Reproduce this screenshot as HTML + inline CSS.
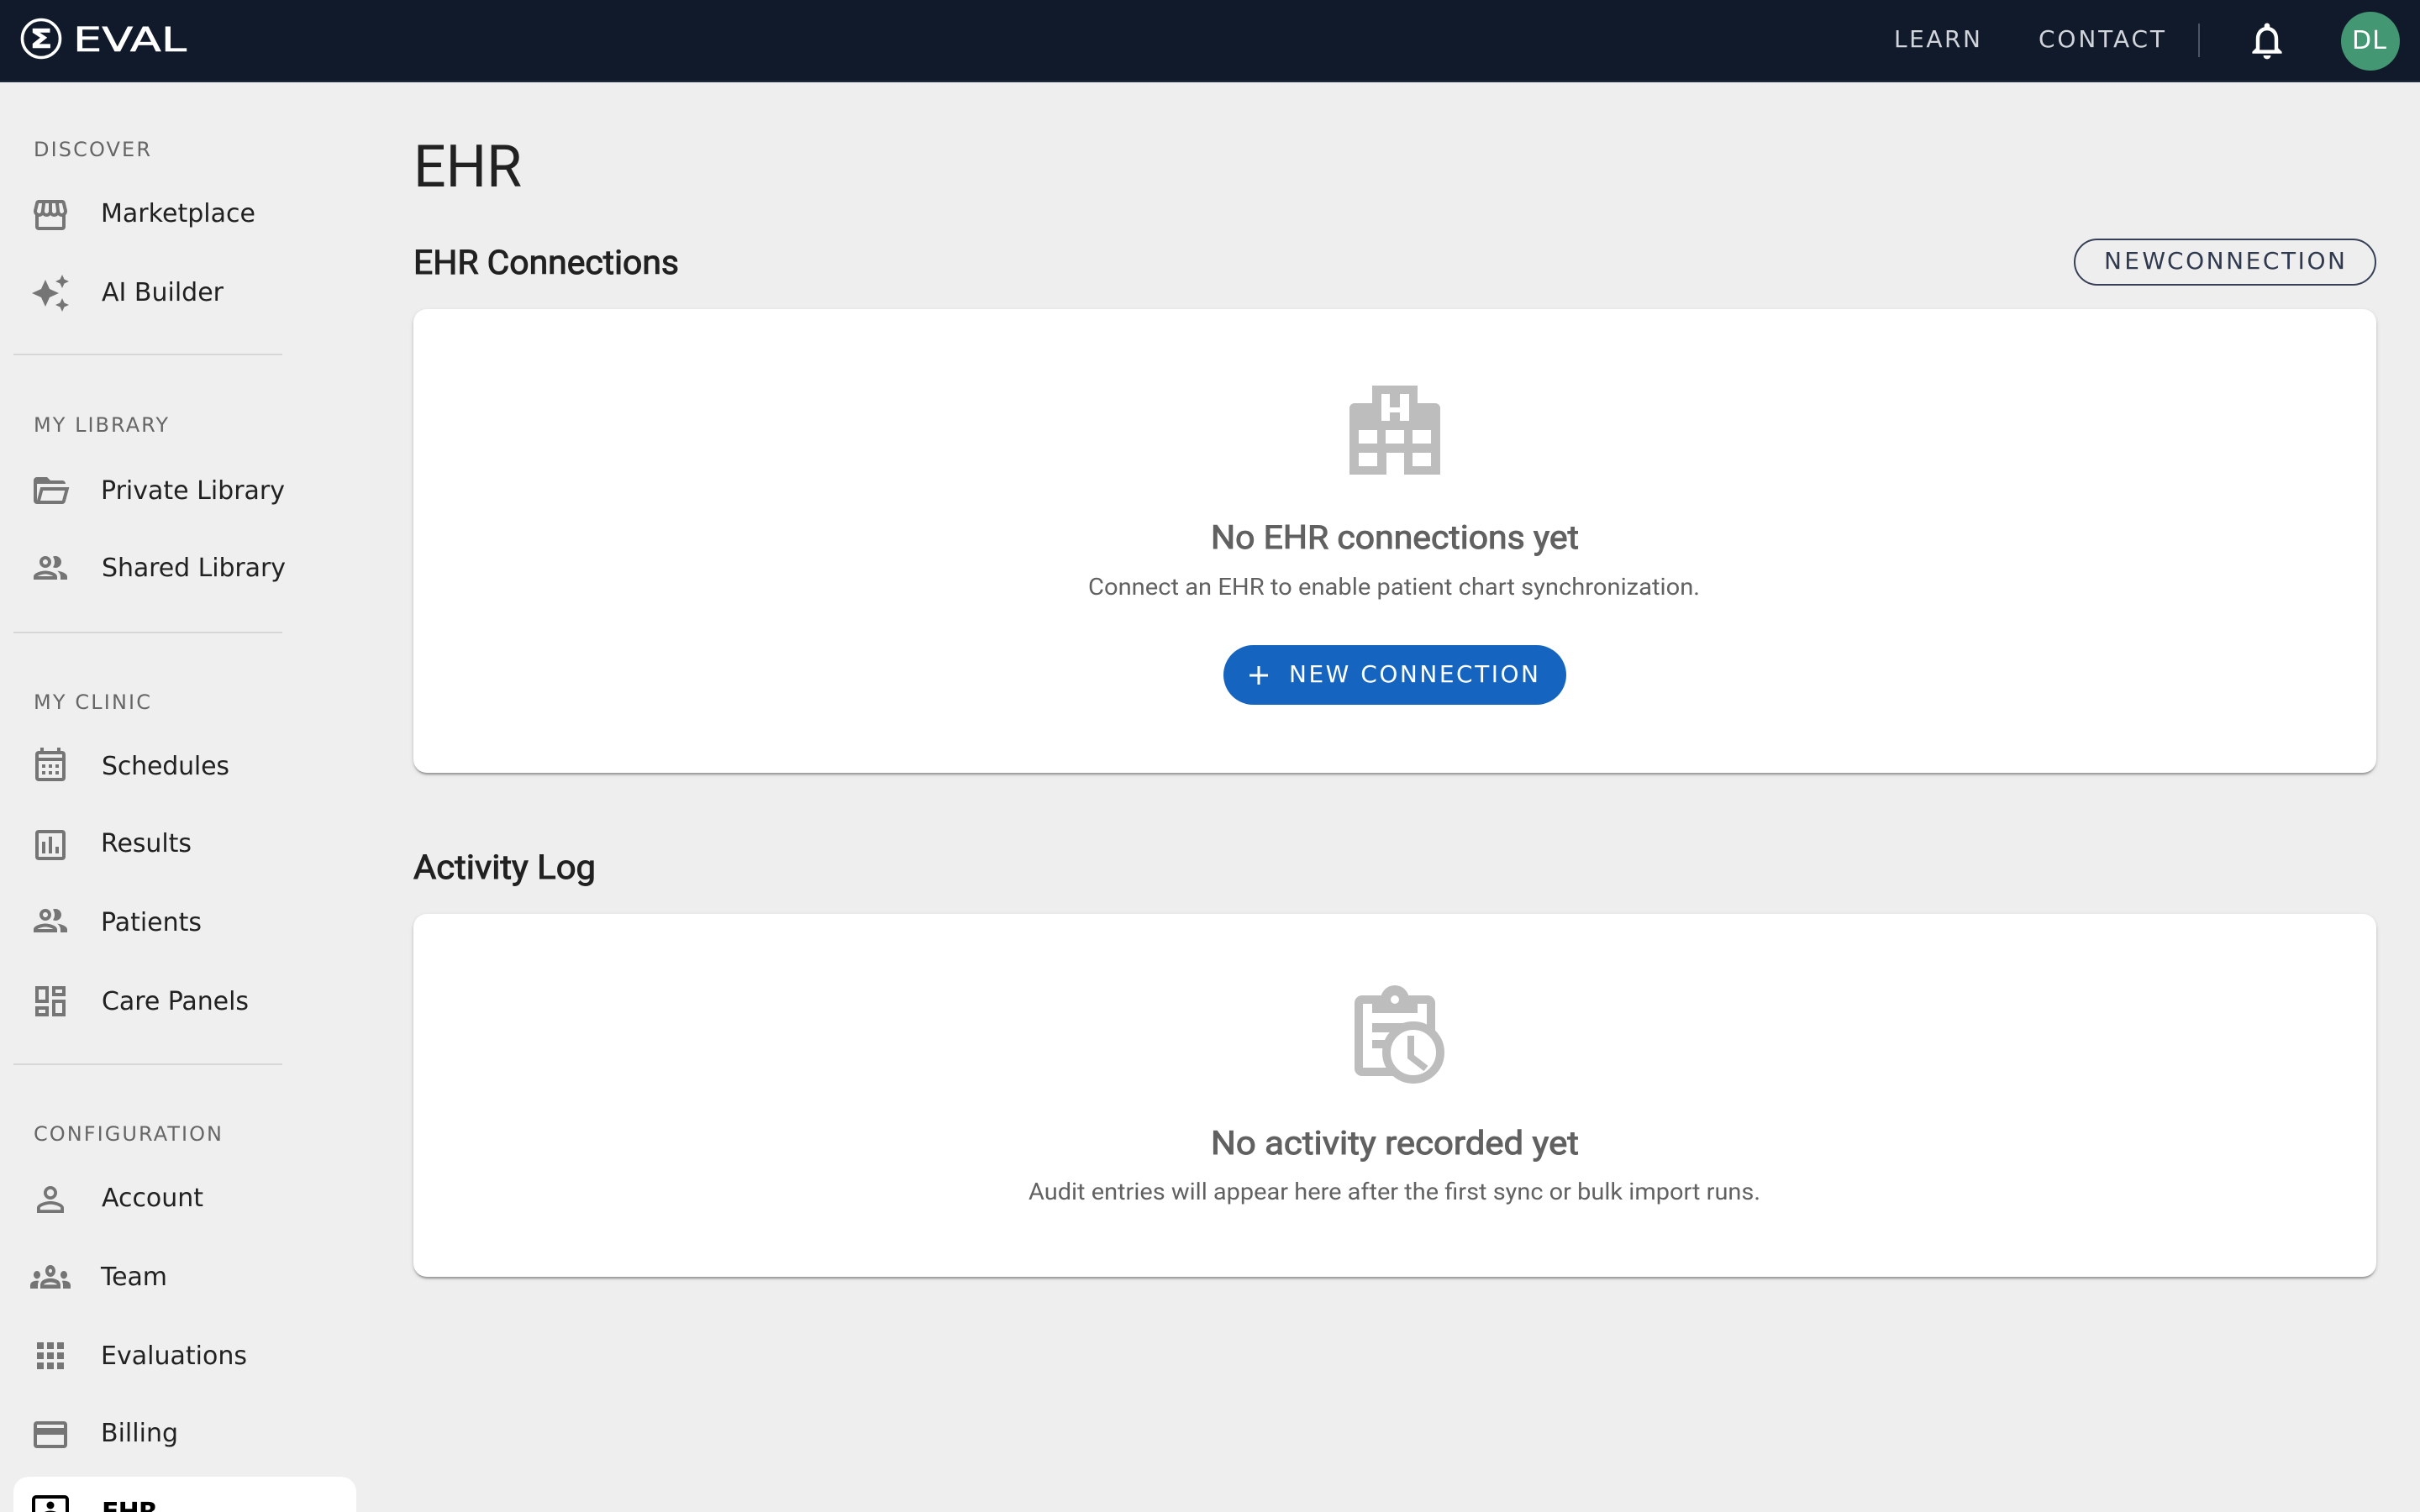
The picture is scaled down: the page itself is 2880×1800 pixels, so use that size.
<!DOCTYPE html>
<html lang="en">
<head>
<meta charset="utf-8">
<title>EHR</title>
<style>
html,body{margin:0;padding:0;width:2880px;height:1800px;overflow:hidden;background:#eeeeee}
.page{position:relative;width:2880px;height:1800px;overflow:hidden;background:#eeeeee}
.bar{position:absolute;left:0;top:0;width:2880px;height:96px;background:#111a2a;border-bottom:2px solid #1e293b}
.side{position:absolute;left:0;top:98px;width:440px;height:1702px;background:#efefef}
.active{position:absolute;left:16px;top:1758px;width:408px;height:84px;background:#fff;border-radius:18px}
.rule{position:absolute;left:16px;width:320px;height:2px;background:#d6d6d6}
.card{position:absolute;left:492px;width:2336px;background:#fff;border-radius:16px;box-shadow:0 4px 2px -2px rgba(0,0,0,.2),0 2px 2px 0 rgba(0,0,0,.14),0 2px 6px 0 rgba(0,0,0,.12)}
.avatar{position:absolute;left:2786px;top:14px;width:70px;height:70px;border-radius:50%;background:#439773}
.pill{position:absolute;left:2468px;top:284px;width:356px;height:52px;border:2px solid #374056;border-radius:28px}
.cta{position:absolute;left:1456px;top:768px;width:408px;height:71px;border-radius:36px;background:#1565c0}
.vr{position:absolute;left:2616px;top:28px;width:2px;height:40px;background:#4b5563}
svg.layer{position:absolute;left:0;top:0}
.d{font-family:"DejaVu Sans",sans-serif}
.r{font-family:"Roboto","Liberation Sans",sans-serif}
.nav{font-size:30px;fill:#212121}
.lab{font-size:24px;fill:#666666}
.ic{fill:#757575}
.top{font-size:28px;fill:#d1d5db}
</style>
</head>
<body>
<div class="page">
<header class="bar"></header>
<aside class="side"></aside>
<div class="active"></div>
<div class="rule" style="top:421px"></div>
<div class="rule" style="top:752px"></div>
<div class="rule" style="top:1266px"></div>
<div class="vr"></div>
<div class="avatar"></div>
<div class="pill"></div>
<div class="card" style="top:368px;height:552px"></div>
<div class="card" style="top:1088px;height:432px"></div>
<div class="cta"></div>

<svg class="layer" width="2880" height="1800" viewBox="0 0 2880 1800" xmlns="http://www.w3.org/2000/svg">
  <!-- logo -->
  <circle cx="49" cy="46" r="22.500" fill="none" stroke="#fff" stroke-width="3.600"/>
  <text class="d" x="35.500" y="57" font-size="31" font-weight="700" fill="#fff" stroke="#fff" stroke-width=".5" textLength="27" lengthAdjust="spacingAndGlyphs">Σ</text>
  <text class="d" x="87" y="61" font-size="40" fill="#fff" stroke="#fff" stroke-width=".6" textLength="135" lengthAdjust="spacingAndGlyphs">EVAL</text>

  <!-- top nav -->
  <text class="d top" x="2254" y="56" textLength="103">LEARN</text>
  <text class="d top" x="2426" y="56" textLength="150">CONTACT</text>
  <path fill="#fff" transform="translate(2671.6 22) scale(2.2)" d="M12 22c1.1 0 2-.9 2-2h-4c0 1.1.9 2 2 2zm6-6v-5c0-3.07-1.63-5.64-4.5-6.32V4c0-.83-.67-1.5-1.5-1.5s-1.5.67-1.5 1.5v.68C7.64 5.36 6 7.92 6 11v5l-2 2v1h16v-1l-2-2zm-2 1H8v-6c0-2.48 1.51-4.5 4-4.5s4 2.02 4 4.5v6z"/>
  <text class="d" x="2799" y="58" font-size="30" fill="#fff" textLength="41">DL</text>

  <!-- sidebar labels -->
  <text class="d lab" x="40" y="186" textLength="139">DISCOVER</text>
  <text class="d lab" x="40" y="514" textLength="160">MY LIBRARY</text>
  <text class="d lab" x="40" y="844" textLength="139">MY CLINIC</text>
  <text class="d lab" x="40" y="1358" textLength="224">CONFIGURATION</text>

  <!-- sidebar items -->
  <text class="d nav" x="120" y="264" textLength="184">Marketplace</text>
  <text class="d nav" x="121" y="358" textLength="145">AI Builder</text>
  <text class="d nav" x="120" y="594" textLength="219">Private Library</text>
  <text class="d nav" x="121" y="686" textLength="219">Shared Library</text>
  <text class="d nav" x="121" y="922" textLength="152">Schedules</text>
  <text class="d nav" x="120" y="1014" textLength="108">Results</text>
  <text class="d nav" x="120" y="1108" textLength="120">Patients</text>
  <text class="d nav" x="121" y="1202" textLength="175">Care Panels</text>
  <text class="d nav" x="121" y="1436" textLength="121">Account</text>
  <text class="d nav" x="120" y="1530" textLength="79">Team</text>
  <text class="d nav" x="120" y="1624" textLength="174">Evaluations</text>
  <text class="d nav" x="120" y="1716" textLength="92">Billing</text>
  <text class="d" x="121" y="1810" font-size="30" font-weight="700" fill="#000" textLength="67">EHR</text>

  <!-- sidebar icons -->
  <path class="ic" transform="translate(36 232) scale(2)" d="M21.9 8.89l-1.05-4.37c-.22-.9-1-1.52-1.91-1.52H5.05c-.9 0-1.69.63-1.9 1.52L2.1 8.89c-.24 1.02-.02 2.06.62 2.88.08.11.19.19.28.29V19c0 1.1.9 2 2 2h14c1.1 0 2-.9 2-2v-6.94c.09-.09.2-.18.28-.28.64-.82.87-1.87.62-2.89zm-2.99-3.9 1.05 4.37c.1.42.01.84-.25 1.17-.14.18-.44.47-.94.47-.61 0-1.14-.49-1.21-1.14L16.98 5l1.93-.01zM13 5h1.96l.54 4.52c.05.39-.07.78-.33 1.07-.22.26-.54.41-.95.41-.67 0-1.22-.59-1.22-1.31V5zM8.49 9.52 9.04 5H11v4.69c0 .72-.55 1.31-1.29 1.31-.34 0-.65-.15-.89-.41-.25-.29-.37-.68-.33-1.07zm-4.45-.16L5.05 5h1.97l-.58 4.86c-.08.65-.6 1.14-1.21 1.14-.49 0-.8-.29-.93-.47-.27-.32-.36-.75-.26-1.17zM5 19v-6.03c.08.01.15.03.23.03.87 0 1.66-.36 2.24-.95.6.6 1.4.95 2.31.95.87 0 1.65-.36 2.23-.93.59.57 1.39.93 2.29.93.84 0 1.64-.35 2.24-.95.58.59 1.37.95 2.24.95.08 0 .15-.02.23-.03V19H5z"/>
  <path class="ic" transform="translate(36 325) scale(2)" d="M19 9l1.25-2.75L23 5l-2.75-1.25L19 1l-1.25 2.75L15 5l2.75 1.25L19 9zm-7.5.5L9 4 6.5 9.5 1 12l5.5 2.5L9 20l2.5-5.5L17 12l-5.5-2.5zM19 15l-1.25 2.75L15 19l2.75 1.25L19 23l1.25-2.75L23 19l-2.75-1.25L19 15z"/>
  <path class="ic" transform="translate(36 560) scale(2)" d="M6.1 10L4 18V8H21A2 2 0 0 0 19 6H12L10 4H4A2 2 0 0 0 2 6V18A2 2 0 0 0 4 20H19C19.9 20 20.7 19.4 20.9 18.5L23.2 10H6.1M19 18H6L7.6 12H20.6L19 18Z"/>
  <path class="ic" transform="translate(36 652) scale(2)" d="M9 13.75c-2.34 0-7 1.17-7 3.5V19h14v-1.75c0-2.33-4.66-3.5-7-3.5zM4.34 17c.84-.58 2.87-1.25 4.66-1.25s3.82.67 4.66 1.25H4.34zM9 12c1.93 0 3.5-1.57 3.5-3.5S10.93 5 9 5 5.5 6.57 5.5 8.5 7.07 12 9 12zm0-5c.83 0 1.5.67 1.5 1.5S9.83 10 9 10s-1.5-.67-1.5-1.5S8.17 7 9 7zm7.04 6.81c1.16.84 1.96 1.96 1.96 3.44V19h4v-1.75c0-2.02-3.5-3.17-5.96-3.44zM15 12c1.93 0 3.5-1.57 3.5-3.5S16.93 5 15 5c-.54 0-1.04.13-1.5.35.63.89 1 1.98 1 3.15s-.37 2.26-1 3.15c.46.22.96.35 1.5.35z"/>
  <path class="ic" transform="translate(36 886) scale(2)" d="M19 4h-1V2h-2v2H8V2H6v2H5c-1.11 0-1.99.9-1.99 2L3 20c0 1.1.89 2 2 2h14c1.1 0 2-.9 2-2V6c0-1.1-.9-2-2-2zm0 16H5V10h14v10zm0-12H5V6h14v2zM9 14H7v-2h2v2zm4 0h-2v-2h2v2zm4 0h-2v-2h2v2zm-8 4H7v-2h2v2zm4 0h-2v-2h2v2zm4 0h-2v-2h2v2z"/>
  <path class="ic" transform="translate(36 982) scale(2)" d="M9 17H7v-7h2v7zm4 0h-2V7h2v10zm4 0h-2v-4h2v4zm2 2H5V5h14v14zm0-16H5c-1.1 0-2 .9-2 2v14c0 1.1.9 2 2 2h14c1.1 0 2-.9 2-2V5c0-1.1-.9-2-2-2z"/>
  <path class="ic" transform="translate(36 1072) scale(2)" d="M9 13.75c-2.34 0-7 1.17-7 3.5V19h14v-1.75c0-2.33-4.66-3.5-7-3.5zM4.34 17c.84-.58 2.87-1.25 4.66-1.25s3.82.67 4.66 1.25H4.34zM9 12c1.93 0 3.5-1.57 3.5-3.5S10.93 5 9 5 5.5 6.57 5.5 8.5 7.07 12 9 12zm0-5c.83 0 1.5.67 1.5 1.5S9.83 10 9 10s-1.5-.67-1.5-1.5S8.17 7 9 7zm7.04 6.81c1.16.84 1.96 1.96 1.96 3.44V19h4v-1.75c0-2.02-3.5-3.17-5.96-3.44zM15 12c1.93 0 3.5-1.57 3.5-3.5S16.93 5 15 5c-.54 0-1.04.13-1.5.35.63.89 1 1.98 1 3.15s-.37 2.26-1 3.15c.46.22.96.35 1.5.35z"/>
  <path class="ic" transform="translate(36 1168) scale(2)" d="M19 5v2h-4V5h4M9 5v6H5V5h4m10 8v6h-4v-6h4M9 17v2H5v-2h4M21 3h-8v6h8V3zM11 3H3v10h8V3zm10 8h-8v10h8V11zm-10 4H3v6h8v-6z"/>
  <path class="ic" transform="translate(36 1404) scale(2)" d="M12 5.9c1.16 0 2.1.94 2.1 2.1s-.94 2.1-2.1 2.1S9.9 9.16 9.9 8s.94-2.1 2.1-2.1m0 9c2.97 0 6.1 1.46 6.1 2.1v1.1H5.9V17c0-.64 3.13-2.1 6.1-2.1M12 4C9.79 4 8 5.79 8 8s1.79 4 4 4 4-1.79 4-4-1.79-4-4-4zm0 9c-2.67 0-8 1.34-8 4v3h16v-3c0-2.66-5.33-4-8-4z"/>
  <path class="ic" transform="translate(36 1492) scale(2 2.333)" d="M4 13c1.1 0 2-.9 2-2s-.9-2-2-2-2 .9-2 2 .9 2 2 2zm1.13 1.1c-.37-.06-.74-.1-1.13-.1-.99 0-1.93.21-2.78.58C.48 14.9 0 15.62 0 16.43V18h4.5v-1.61c0-.83.23-1.61.63-2.29zM20 13c1.1 0 2-.9 2-2s-.9-2-2-2-2 .9-2 2 .9 2 2 2zm4 3.43c0-.81-.48-1.53-1.22-1.85-.85-.37-1.79-.58-2.78-.58-.39 0-.76.04-1.13.1.4.68.63 1.46.63 2.29V18H24v-1.57zm-7.76-2.78c-1.17-.52-2.61-.9-4.24-.9-1.63 0-3.07.39-4.24.9C6.68 14.13 6 15.21 6 16.39V18h12v-1.61c0-1.18-.68-2.26-1.76-2.74zM8.07 16c.09-.23.13-.39.91-.69.97-.38 1.99-.56 3.02-.56s2.05.18 3.02.56c.77.3.81.46.91.69H8.07zM12 8c.55 0 1 .45 1 1s-.45 1-1 1-1-.45-1-1 .45-1 1-1m0-2c-1.66 0-3 1.34-3 3s1.34 3 3 3 3-1.34 3-3-1.34-3-3-3z"/>
  <path class="ic" transform="translate(36 1590) scale(2)" d="M4 8h4V4H4v4zm6 12h4v-4h-4v4zm-6 0h4v-4H4v4zm0-6h4v-4H4v4zm6 0h4v-4h-4v4zm6-10v4h4V4h-4zm-6 4h4V4h-4v4zm6 6h4v-4h-4v4zm0 6h4v-4h-4v4z"/>
  <path class="ic" transform="translate(36 1684) scale(2)" d="M20 4H4c-1.11 0-1.99.89-1.99 2L2 18c0 1.11.89 2 2 2h16c1.11 0 2-.89 2-2V6c0-1.11-.89-2-2-2zm0 14H4v-6h16v6zm0-10H4V6h16v2z"/>
  <!-- EHR active icon -->
  <rect x="40" y="1782" width="40" height="40" rx="3" fill="none" stroke="#000" stroke-width="4"/>
  <circle cx="60" cy="1792" r="4.500" fill="#000"/>
  <path d="M50 1804c0-4 6-5.500 10-5.500s10 1.500 10 5.500z" fill="#000"/>

  <!-- main headings -->
  <text class="r" x="492" y="222" font-size="70" fill="#212121" textLength="129" lengthAdjust="spacingAndGlyphs">EHR</text>
  <text class="r" x="492" y="326" font-size="40" fill="#212121" stroke="#212121" stroke-width="1" textLength="316" lengthAdjust="spacingAndGlyphs">EHR Connections</text>
  <text class="r" x="492" y="1046" font-size="40" fill="#212121" stroke="#212121" stroke-width="1" textLength="217" lengthAdjust="spacingAndGlyphs">Activity Log</text>

  <!-- outlined button -->
  <text class="d" y="320" font-size="28" fill="#2f3a4f"><tspan x="2504" textLength="73">NEW</tspan><tspan x="2579" textLength="212">CONNECTION</tspan></text>

  <!-- hospital icon -->
  <path fill="#bdbdbd" fill-rule="evenodd" d="M1633 459h54v21h21a6 6 0 0 1 6 6v79h-43v-26h-21v26h-44v-79a6 6 0 0 1 6-6h21zM1644 469v32h10v-10h12v10h11v-32h-11v16h-12v-16zM1617 512v16h22v-16zM1649 512v16h22v-16zM1681 512v16h22v-16zM1617 539v16h22v-16zM1681 539v16h22v-16z"/>
  <text class="r" x="1441" y="653" font-size="39" fill="#616161" stroke="#616161" stroke-width="1" textLength="438" lengthAdjust="spacingAndGlyphs">No EHR connections yet</text>
  <text class="r" x="1295" y="708" font-size="28" fill="#616161" textLength="728" lengthAdjust="spacingAndGlyphs">Connect an EHR to enable patient chart synchronization.</text>

  <!-- primary button -->
  <path d="M1498 793v22M1487 804h22" stroke="#fff" stroke-width="3" fill="none"/>
  <text class="d" x="1534" y="812" font-size="28" fill="#fff" textLength="297">NEW CONNECTION</text>

  <!-- pending icon -->
  <g transform="translate(0 1)">
    <rect x="1612" y="1184" width="96" height="96" rx="9" fill="#bdbdbd"/>
    <circle cx="1660" cy="1189" r="17" fill="#bdbdbd"/>
    <rect x="1622" y="1194" width="76" height="76" fill="#fff"/>
    <rect x="1633" y="1190" width="54" height="15" fill="#bdbdbd"/>
    <circle cx="1660" cy="1189" r="5" fill="#fff"/>
    <rect x="1633" y="1217" width="62" height="11" fill="#bdbdbd"/>
    <rect x="1633" y="1237" width="26" height="10" fill="#bdbdbd"/>
    <circle cx="1682" cy="1252" r="32" fill="#fff" stroke="#bdbdbd" stroke-width="10"/>
    <path d="M1679 1232v25l18 14" fill="none" stroke="#bdbdbd" stroke-width="8"/>
  </g>
  <text class="r" x="1441" y="1374" font-size="39" fill="#616161" stroke="#616161" stroke-width="1" textLength="438" lengthAdjust="spacingAndGlyphs">No activity recorded yet</text>
  <text class="r" x="1224" y="1428" font-size="28" fill="#616161" textLength="871" lengthAdjust="spacingAndGlyphs">Audit entries will appear here after the first sync or bulk import runs.</text>
</svg>
</div>
</body>
</html>
